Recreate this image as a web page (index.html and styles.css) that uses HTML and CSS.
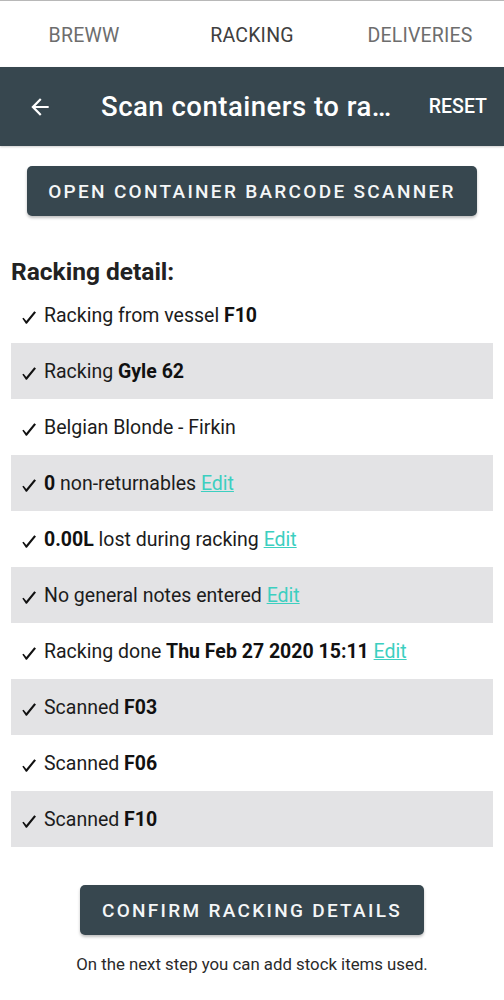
FILE: index.html
```html
<!DOCTYPE html>
<html>
<head>
<meta charset="utf-8">
<link rel="stylesheet" href="styles.css">
</head>
<body>
<div class="tabs">
  <div class="tab">BREWW</div>
  <div class="tab active">RACKING</div>
  <div class="tab">DELIVERIES</div>
</div>
<header class="bar">
  <svg class="back" width="24" height="24" viewBox="0 0 24 24"><path d="M20 11H7.83l5.59-5.59L12 4l-8 8 8 8 1.41-1.41L7.83 13H20v-2z" fill="#fff"/></svg>
  <div class="title">Scan containers to ra…</div>
  <div class="reset">RESET</div>
</header>
<main class="content">
  <div class="btn-wrap"><button class="btn wide">OPEN CONTAINER BARCODE SCANNER</button></div>
  <h2 class="heading">Racking detail:</h2>
  <ul class="list">
    <li><svg class="chk" viewBox="0 0 14 13"><path d="M0.3 7.6 L1.6 6.7 L4.3 10 L12.3 0.3 L14 1.4 L4.9 12.7 L3.9 12.7 Z"/></svg><span>Racking from vessel <b>F10</b></span></li>
    <li class="alt"><svg class="chk" viewBox="0 0 14 13"><path d="M0.3 7.6 L1.6 6.7 L4.3 10 L12.3 0.3 L14 1.4 L4.9 12.7 L3.9 12.7 Z"/></svg><span>Racking <b>Gyle 62</b></span></li>
    <li><svg class="chk" viewBox="0 0 14 13"><path d="M0.3 7.6 L1.6 6.7 L4.3 10 L12.3 0.3 L14 1.4 L4.9 12.7 L3.9 12.7 Z"/></svg><span>Belgian Blonde - Firkin</span></li>
    <li class="alt"><svg class="chk" viewBox="0 0 14 13"><path d="M0.3 7.6 L1.6 6.7 L4.3 10 L12.3 0.3 L14 1.4 L4.9 12.7 L3.9 12.7 Z"/></svg><span><b>0</b> non-returnables <a class="edit">Edit</a></span></li>
    <li><svg class="chk" viewBox="0 0 14 13"><path d="M0.3 7.6 L1.6 6.7 L4.3 10 L12.3 0.3 L14 1.4 L4.9 12.7 L3.9 12.7 Z"/></svg><span><b>0.00L</b> lost during racking <a class="edit">Edit</a></span></li>
    <li class="alt"><svg class="chk" viewBox="0 0 14 13"><path d="M0.3 7.6 L1.6 6.7 L4.3 10 L12.3 0.3 L14 1.4 L4.9 12.7 L3.9 12.7 Z"/></svg><span>No general notes entered <a class="edit">Edit</a></span></li>
    <li><svg class="chk" viewBox="0 0 14 13"><path d="M0.3 7.6 L1.6 6.7 L4.3 10 L12.3 0.3 L14 1.4 L4.9 12.7 L3.9 12.7 Z"/></svg><span>Racking done <b>Thu Feb 27 2020 15:11</b> <a class="edit">Edit</a></span></li>
    <li class="alt"><svg class="chk" viewBox="0 0 14 13"><path d="M0.3 7.6 L1.6 6.7 L4.3 10 L12.3 0.3 L14 1.4 L4.9 12.7 L3.9 12.7 Z"/></svg><span>Scanned <b>F03</b></span></li>
    <li><svg class="chk" viewBox="0 0 14 13"><path d="M0.3 7.6 L1.6 6.7 L4.3 10 L12.3 0.3 L14 1.4 L4.9 12.7 L3.9 12.7 Z"/></svg><span>Scanned <b>F06</b></span></li>
    <li class="alt"><svg class="chk" viewBox="0 0 14 13"><path d="M0.3 7.6 L1.6 6.7 L4.3 10 L12.3 0.3 L14 1.4 L4.9 12.7 L3.9 12.7 Z"/></svg><span>Scanned <b>F10</b></span></li>
  </ul>
  <div class="confirm-wrap"><button class="btn">CONFIRM RACKING DETAILS</button></div>
  <p class="note">On the next step you can add stock items used.</p>
</main>
</body>
</html>
```
FILE: styles.css
```css
html, body {
  margin: 0;
  padding: 0;
  background: #fff;
  font-family: Roboto, "Liberation Sans", sans-serif;
  color: #1c1c1c;
}
.tabs {
  display: grid;
  grid-template-columns: repeat(3, 1fr);
  height: 67px;
  border-top: 1px solid #b8b8b8;
  box-sizing: border-box;
}
.tab {
  display: flex;
  align-items: center;
  justify-content: center;
  font-size: 19.5px;
  color: #6d6d6d;
  letter-spacing: 0.2px;
  padding-top: 2px;
}
.tab.active {
  color: #404040;
}
.bar {
  height: 79px;
  background: #37474f;
  display: flex;
  align-items: center;
  color: #fff;
  box-shadow: 0 1px 2px rgba(0,0,0,0.2);
}
.back {
  margin-left: 27px;
  width: 26px;
  height: 26px;
  flex: none;
}
.title {
  margin-left: 48px;
  font-size: 27.5px;
  font-weight: 500;
  letter-spacing: 0.5px;
  flex: 1;
  white-space: nowrap;
}
.reset {
  font-size: 19.5px;
  font-weight: 500;
  margin-right: 17px;
}
.content {
  padding: 20px 11px 0;
}
.btn-wrap {
  padding: 0 16px;
}
.btn {
  background: #37474f;
  color: #f4f6f7;
  border: none;
  border-radius: 5px;
  font-family: Roboto, "Liberation Sans", sans-serif;
  font-size: 19px;
  font-weight: 500;
  letter-spacing: 2.3px;
  height: 50px;
  box-shadow: 0 2px 3px rgba(0,0,0,0.25);
  padding: 0 22px;
  white-space: nowrap;
}
.btn.wide {
  width: 100%;
  padding: 0;
}
.heading {
  margin: 43px 0 0;
  font-size: 24.5px;
  font-weight: 700;
  color: #222;
  line-height: 26px;
}
.list {
  list-style: none;
  margin: 2px 0 0;
  padding: 0;
}
.list li {
  height: 56px;
  display: flex;
  align-items: center;
  padding-left: 11px;
  font-size: 19.5px;
  white-space: pre;
  color: #1c1c1c;
}
.chk {
  width: 14px;
  height: 13px;
  flex: none;
  margin-right: 8px;
  margin-top: 4px;
  fill: #111;
}
.list li.alt {
  background: #e3e3e5;
}
.list b {
  font-weight: 700;
  color: #111;
}
.edit {
  color: #3ccfc0;
  text-decoration: underline;
  text-decoration-thickness: 1px;
}
.confirm-wrap {
  display: flex;
  justify-content: center;
  margin-top: 38px;
}
.note {
  text-align: center;
  font-size: 16.8px;
  color: #2a2a2a;
  margin: 19px 0 0;
}
```
